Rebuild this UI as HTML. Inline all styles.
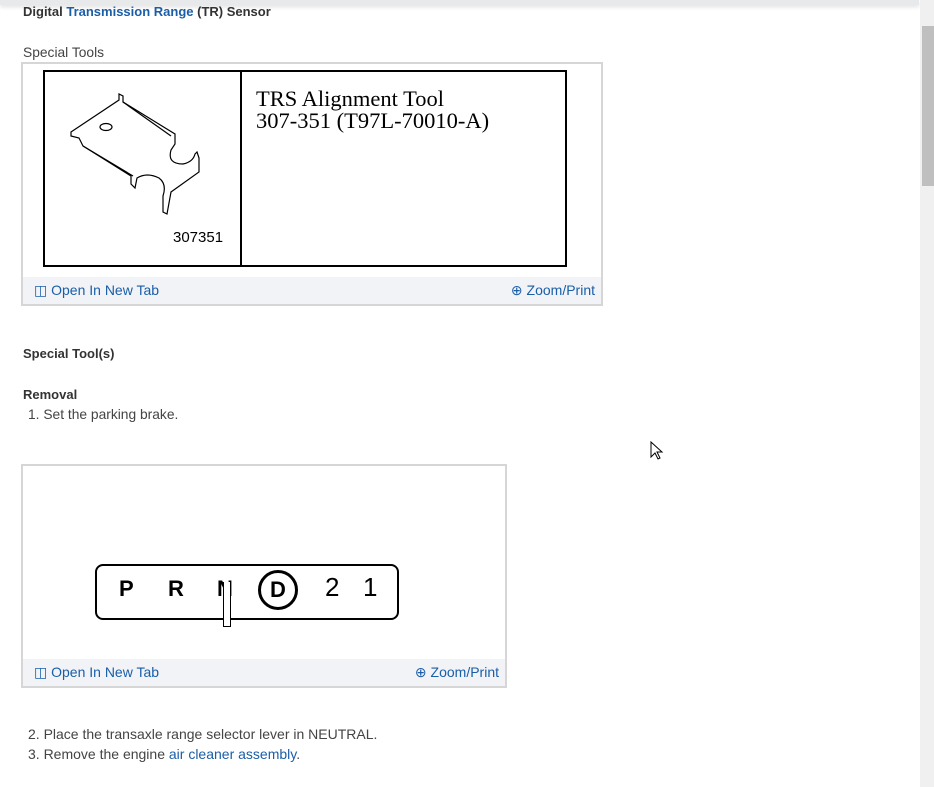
<!DOCTYPE html>
<html><head><style>
body{margin:0;width:934px;height:787px;background:#fff;position:relative;overflow:hidden;font-family:"Liberation Sans",Arial,sans-serif;color:#444;font-size:13.8px}
.a{position:absolute;white-space:nowrap}
.b{font-weight:bold;color:#333;font-size:13px}
.l{color:#1a5ea8}
.card{position:absolute;border:2px solid #d6d6d6;background:#fff;box-sizing:border-box}
.foot{position:absolute;left:0;right:0;bottom:0;height:27px;background:#f1f3f7;color:#1a5ea8;font-size:14px}
.foot .o{position:absolute;left:11px;top:5px}
.foot .z{position:absolute;right:6px;top:5px}
</style></head><body>
<div class="a" style="left:0;top:0;width:919px;height:5px;background:#e8e9eb;box-shadow:0 2px 4px rgba(0,0,0,.12)"></div>
<div class="a" style="left:920px;top:0;width:14px;height:787px;background:#f0f0f0"></div>
<div class="a" style="left:922px;top:26px;width:12px;height:160px;background:#bfbfbf"></div>

<div class="a b" style="left:23px;top:4px">Digital <span class="l">Transmission Range</span> (TR) Sensor</div>
<div class="a" style="left:23px;top:45px">Special Tools</div>

<div class="card" style="left:21px;top:62px;width:582px;height:244px">
  <div class="a" style="left:20px;top:6px;width:524px;height:197px;border:2px solid #000;box-sizing:border-box"></div>
  <div class="a" style="left:217px;top:6px;width:2px;height:197px;background:#000"></div>
  <svg class="a" style="left:40px;top:28px" width="160" height="130" viewBox="0 0 160 130" fill="none" stroke="#000" stroke-width="1.2">
    <path d="M8 40 L56 8 L56 2 L60 4 L60 10 L112 42 L112 52 L108 58 Q104 72 120 72 Q130 70 132 62 L134 60 L136 66 L136 80 L108 100 L104 122 L100 120 L100 104 Q104 92 96 86 Q84 80 74 86 L72 96 L68 92 L68 84 L20 54 L16 46 L8 44 Z"/>
    <path d="M60 10 L108 44"/><path d="M20 54 L70 84"/>
    <ellipse cx="43" cy="35" rx="6" ry="3.5"/>
  </svg>
  <div class="a" style="left:150px;top:165px;font-size:15px;color:#000">307351</div>
  <div class="a" style="left:233px;top:24px;font-family:'Liberation Serif',serif;font-size:22.5px;line-height:22px;color:#000">TRS Alignment Tool<br>307-351 (T97L-70010-A)</div>
  <div class="foot"><span class="o">◫ Open In New Tab</span><span class="z">⊕ Zoom/Print</span></div>
</div>

<div class="a b" style="left:23px;top:346px">Special Tool(s)</div>
<div class="a b" style="left:23px;top:387px">Removal</div>
<div class="a" style="left:28px;top:407px">1. Set the parking brake.</div>

<div class="card" style="left:21px;top:464px;width:486px;height:224px">
  <div class="a" style="left:72px;top:98px;width:304px;height:56px;border:2.5px solid #000;border-radius:8px;box-sizing:border-box"></div>
  <div class="a" style="left:96px;top:110px;font-size:22px;font-weight:bold;color:#000">P</div>
  <div class="a" style="left:145px;top:110px;font-size:22px;font-weight:bold;color:#000">R</div>
  <div class="a" style="left:194px;top:110px;font-size:22px;font-weight:bold;color:#000">N</div>
  <div class="a" style="left:200px;top:116px;width:6px;height:44px;background:#fff;border:1.5px solid #000;border-top:none"></div>
  <div class="a" style="left:235px;top:104px;width:40px;height:40px;border:3px solid #000;border-radius:50%;box-sizing:border-box;text-align:center;line-height:34px;font-size:22px;font-weight:bold;color:#000">D</div>
  <div class="a" style="left:302px;top:106px;font-size:26px;color:#000">2</div>
  <div class="a" style="left:340px;top:106px;font-size:26px;color:#000">1</div>
  <div class="foot"><span class="o">◫ Open In New Tab</span><span class="z">⊕ Zoom/Print</span></div>
</div>

<div class="a" style="left:28px;top:726px;font-size:14px">2. Place the transaxle range selector lever in NEUTRAL.</div>
<div class="a" style="left:28px;top:746px;font-size:14px">3. Remove the engine <span class="l">air cleaner assembly</span>.</div>
<svg class="a" style="left:650px;top:441px" width="14" height="20" viewBox="0 0 14 20"><path d="M1 1 L1 16 L5 12 L8 18 L10 17 L7 11 L12 11 Z" fill="#fff" stroke="#000"/></svg>
</body></html>
